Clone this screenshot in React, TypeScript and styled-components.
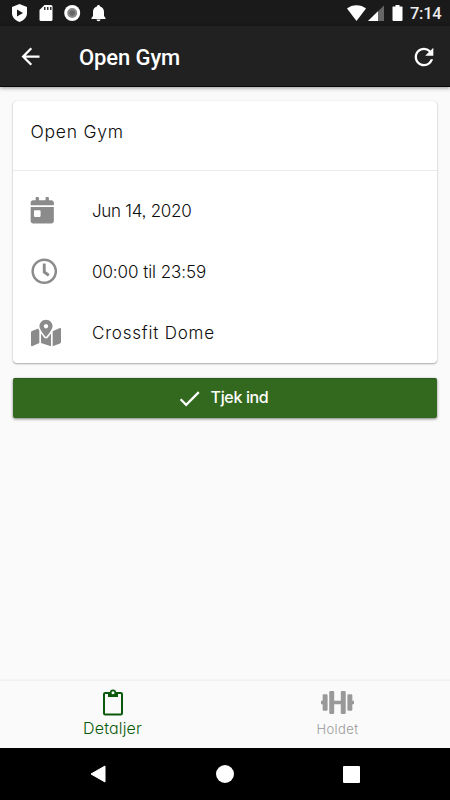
import React from "react";
import styled, { createGlobalStyle } from "styled-components";
import { FaCalendarDay, FaRegClock, FaMapMarkedAlt, FaDumbbell } from "react-icons/fa";
import { MdArrowBack, MdRefresh, MdCheck } from "react-icons/md";

const GlobalStyle = createGlobalStyle`
  * { box-sizing: border-box; }
  body { margin: 0; background: #fafafa; }
  svg { display: block; flex: none; }
`;

const Screen = styled.div`
  width: 450px;
  height: 800px;
  display: flex;
  flex-direction: column;
  background: #fafafa;
  font-family: Inter, "Open Sans", sans-serif;
  font-feature-settings: "cv11", "ss03";
  overflow: hidden;
`;

const StatusBar = styled.div`
  height: 26px;
  flex: none;
  display: flex;
  align-items: center;
  justify-content: space-between;
  padding: 0 9px 0 12px;
  background: #1a1a1a;
`;

const StatusGroup = styled.div`
  display: flex;
  align-items: center;
`;

const Clock = styled.span`
  font: 500 16.5px/26px Roboto, sans-serif;
  color: #ededed;
  width: 31px;
  margin-left: 7px;
  padding-top: 2px;
  white-space: nowrap;
  letter-spacing: -0.3px;
`;

const AppBar = styled.header`
  height: 61px;
  flex: none;
  display: flex;
  align-items: center;
  padding: 0 12px 0 17px;
  background: #212121;
  color: #fff;
  border-bottom: 1px solid #080808;
  box-shadow: 0 1px 4px rgba(0, 0, 0, 0.4);
  z-index: 1;

  svg {
    margin-top: 1px;
  }
`;

const AppTitle = styled.h1`
  flex: 1;
  margin: 3px 0 0 35px;
  font: 500 22px/28px Roboto, sans-serif;
  letter-spacing: -0.1px;
`;

const Content = styled.main`
  flex: 1;
  display: flex;
  flex-direction: column;
  gap: 15px;
  padding: 14px 13px 0;
`;

const Card = styled.section`
  height: 262px;
  background: #fff;
  border-radius: 4px;
  box-shadow: 0 1px 2px rgba(0, 0, 0, 0.32), 0 0 1px rgba(0, 0, 0, 0.18);
`;

const CardHeader = styled.div`
  height: 70px;
  padding: 17px 17.5px 0;
  border-bottom: 1px solid #ebebeb;
`;

const CardBody = styled.div`
  padding-top: 9px;
`;

const DetailRow = styled.div`
  height: 61px;
  display: flex;
  align-items: center;
  padding-left: 17px;
`;

const IconSlot = styled.span<{ $shift: number }>`
  width: 62px;
  padding-left: ${(p) => p.$shift}px;
  color: #8b8b8b;

  svg {
    margin-left: -2px;
  }
`;

const Label = styled.span<{ $spacing: number; $size?: number }>`
  font-size: ${(p) => p.$size ?? 17}px;
  line-height: 28px;
  font-weight: 300;
  color: #0c0c0c;
  letter-spacing: ${(p) => p.$spacing}px;
  white-space: nowrap;
`;

const CheckInButton = styled.button`
  height: 40px;
  display: flex;
  align-items: center;
  justify-content: center;
  gap: 8px;
  padding: 0 6px 3px 0;
  border: 0;
  border-top: 1px solid #265a18;
  border-radius: 2px;
  background: #33691e;
  color: #fff;
  font-family: inherit;
  font-feature-settings: inherit;
  font-size: 16px;
  font-weight: 500;
  letter-spacing: -0.35px;
  box-shadow: 0 1px 3px rgba(0, 0, 0, 0.5);

  svg {
    margin-top: 2px;
  }
`;

const TabBar = styled.nav`
  height: 68px;
  flex: none;
  display: grid;
  grid-template-columns: 1fr 1fr;
  border-top: 1px solid #f0f0f0;
  box-shadow: 0 -1px 1px rgba(0, 0, 0, 0.025);
`;

const Tab = styled.a<{ $active?: boolean }>`
  display: flex;
  flex-direction: column;
  align-items: center;
  gap: ${(p) => (p.$active ? 1 : 0)}px;
  padding-top: ${(p) => (p.$active ? 8 : 5)}px;
  color: ${(p) => (p.$active ? "#0b5a0b" : "#999")};
  font-size: ${(p) => (p.$active ? 16 : 13)}px;
  font-weight: 300;
  line-height: ${(p) => (p.$active ? 22 : 20)}px;
  letter-spacing: ${(p) => (p.$active ? 0.15 : 0.4)}px;
`;

const SystemNav = styled.footer`
  height: 52px;
  flex: none;
  display: flex;
  align-items: center;
  justify-content: space-between;
  padding: 0 90px;
  background: #000;
`;

const details = [
  { text: "Jun 14, 2020", spacing: -0.27, shift: 1, icon: <FaCalendarDay size={26.5} /> },
  { text: "00:00 til 23:59", spacing: -0.07, shift: 2.5, icon: <FaRegClock size={26.5} /> },
  { text: "Crossfit Dome", spacing: 0.8, shift: 2.5, icon: <FaMapMarkedAlt size={30} /> },
];

function Notifications() {
  return (
    <svg width="94" height="18" viewBox="0 0 94 18" fill="#fff">
      <path d="M7.500 0 15 3v6c0 4-3 7.500-7.500 9C3 16.500 0 13 0 9V3Z" />
      <path d="M5 5.500v7l6-3.500Z" fill="#1a1a1a" />
      <path d="M32.500 1H39q1.500 0 1.500 1.500v13Q40.500 17 39 17H29q-1.500 0-1.500-1.500V6Z" />
      <path d="M32 3h1.500v3H32zm3 0h1.500v3H35zm3 0h1.500v3H38z" fill="#333" />
      <circle cx="60.200" cy="9" r="8" />
      <circle cx="60.200" cy="9" r="5" fill="#8a8a8a" />
      <circle cx="60.200" cy="9" r="2.800" fill="#666" />
      <path d="M86.500 1c1 0 1.500.7 1.500 1.500 2.700.8 4 2.800 4 5.500v4l1.500 2v1h-14v-1l1.500-2V8c0-2.700 1.300-4.700 4-5.500 0-.8.500-1.500 1.500-1.500ZM84.500 15.500h4c0 2.200-4 2.200-4 0Z" />
    </svg>
  );
}

function DeviceStatus() {
  return (
    <svg width="56" height="18" viewBox="0 0 56 18">
      <path d="M0 4.500C5 0 14 0 19 4.500L9.500 17Z" fill="#fff" />
      <path d="M37 1.500V17H21Z" fill="#666" />
      <path d="M31 7.300V17H21Z" fill="#fff" />
      <path d="M48.500 1h4v1.500H55q.5 0 .5.500v13q0 1-1 1h-8q-1 0-1-1V3q0-.5.500-.5h2.500Z" fill="#fff" />
    </svg>
  );
}

function Clipboard() {
  return (
    <svg width="20" height="27" viewBox="0 0 20 27" fill="none" stroke="currentColor">
      <rect x="1" y="4" width="18" height="21.500" rx="1.200" strokeWidth="2" />
      <path d="M5 4h10v4H5Z" fill="currentColor" stroke="none" />
      <circle cx="10" cy="3.700" r="2.300" fill="#fafafa" strokeWidth="1.600" />
    </svg>
  );
}

export default function App() {
  return (
    <>
      <GlobalStyle />
      <Screen>
        <StatusBar>
          <Notifications />
          <StatusGroup>
            <DeviceStatus />
            <Clock>7:14</Clock>
          </StatusGroup>
        </StatusBar>
        <AppBar>
          <MdArrowBack size={27} />
          <AppTitle>Open Gym</AppTitle>
          <MdRefresh size={28} />
        </AppBar>
        <Content>
          <Card>
            <CardHeader>
              <Label $spacing={0.75} $size={17.5}>Open Gym</Label>
            </CardHeader>
            <CardBody>
              {details.map((item) => (
                <DetailRow key={item.text}>
                  <IconSlot $shift={item.shift}>{item.icon}</IconSlot>
                  <Label $spacing={item.spacing}>{item.text}</Label>
                </DetailRow>
              ))}
            </CardBody>
          </Card>
          <CheckInButton>
            <MdCheck size={27} />
            <span>Tjek ind</span>
          </CheckInButton>
        </Content>
        <TabBar>
          <Tab $active>
            <Clipboard />
            <span>Detaljer</span>
          </Tab>
          <Tab>
            <FaDumbbell size={33} />
            <span>Holdet</span>
          </Tab>
        </TabBar>
        <SystemNav>
          <svg width="16" height="18" viewBox="0 0 16 18">
            <path d="M15 1v16L1 9Z" fill="#fff" stroke="#fff" strokeLinejoin="round" />
          </svg>
          <svg width="18" height="18" viewBox="0 0 18 18">
            <circle cx="9" cy="9" r="9" fill="#fff" />
          </svg>
          <svg width="17" height="17" viewBox="0 0 17 17">
            <rect width="17" height="17" rx="1" fill="#fff" />
          </svg>
        </SystemNav>
      </Screen>
    </>
  );
}
